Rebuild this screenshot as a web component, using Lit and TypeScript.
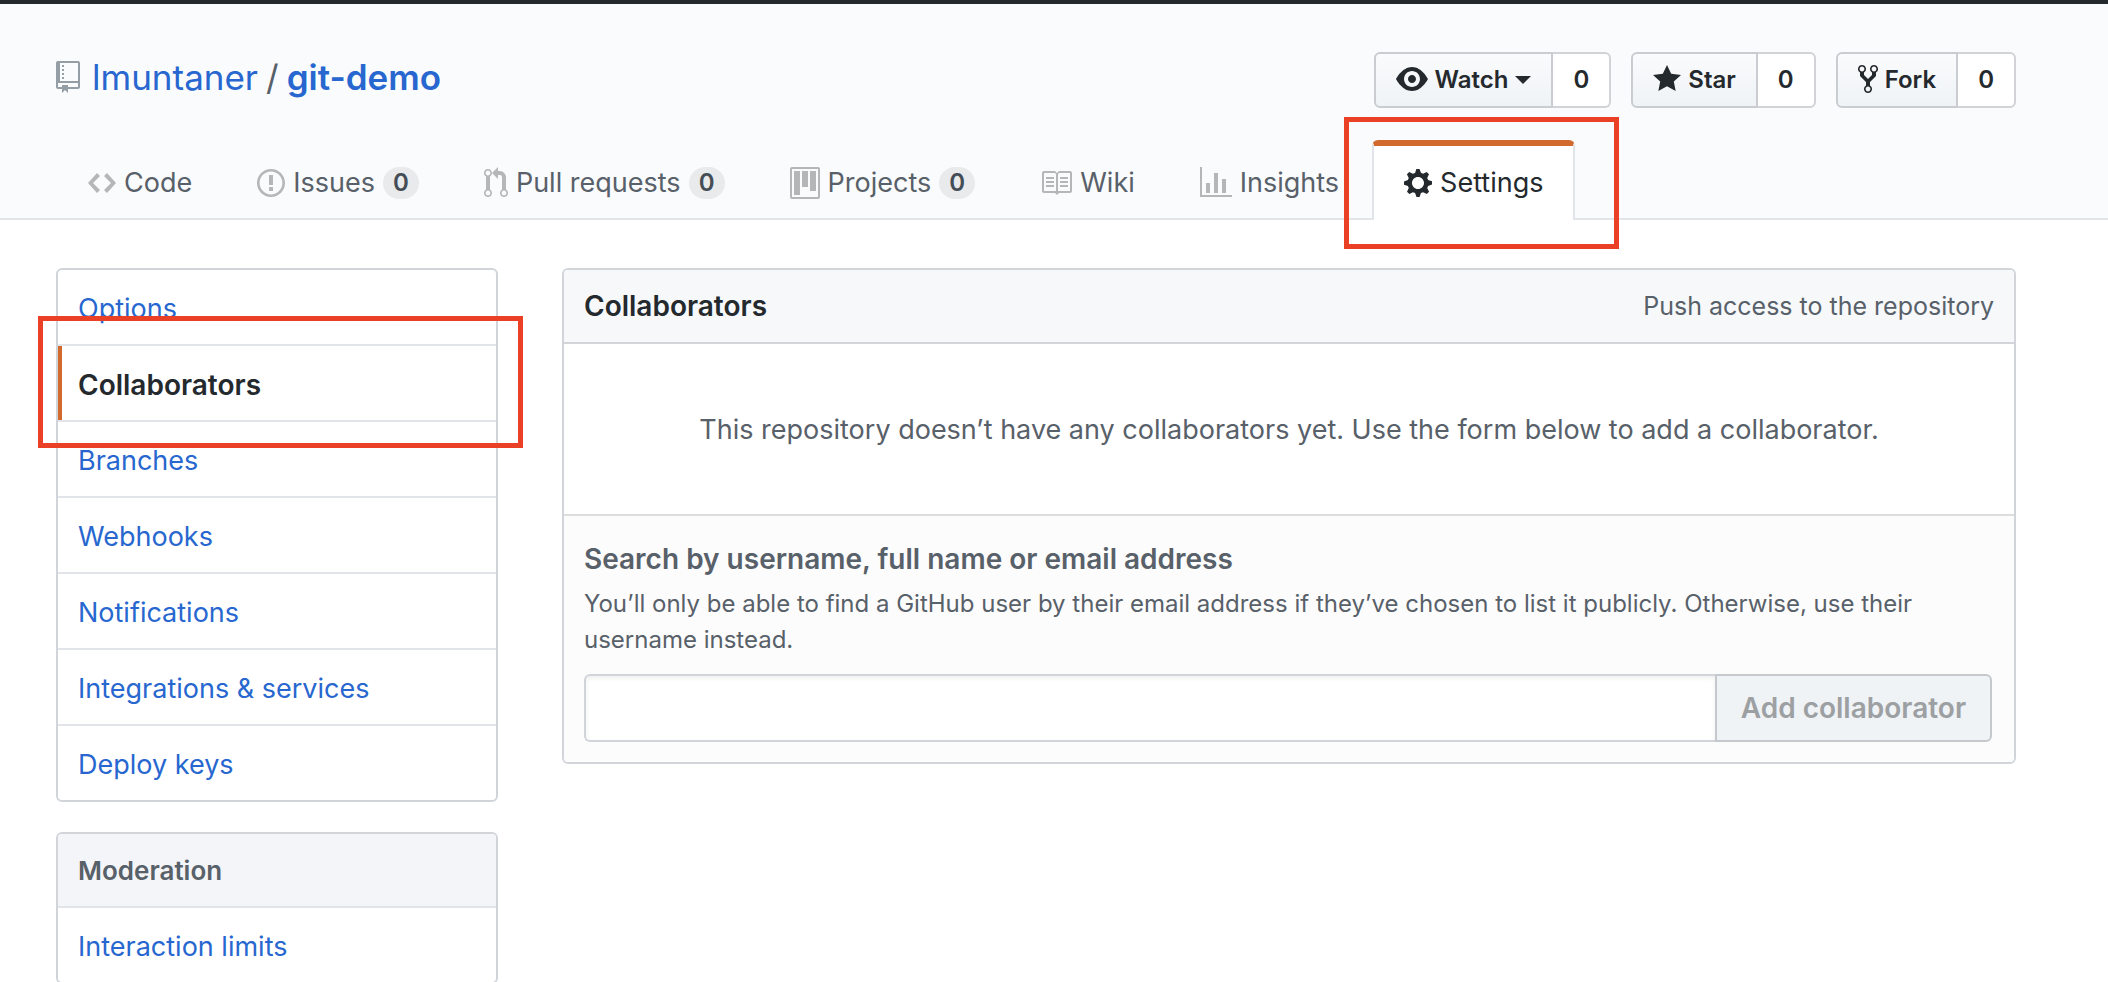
import { LitElement, html, css, nothing } from "lit";
import { customElement } from "lit/decorators.js";
import { classMap } from "lit/directives/class-map.js";

type Icon = { w: number; d: string };

const icons: Record<string, Icon> = {
  repo: { w: 12, d: "M4 9H3V8h1v1zm0-3H3v1h1V6zm0-2H3v1h1V4zm0-2H3v1h1V2zm8-1v12c0 .55-.45 1-1 1H6v2l-1.5-1.5L3 16v-2H1c-.55 0-1-.45-1-1V1c0-.55.45-1 1-1h10c.55 0 1 .45 1 1zm-1 10H1v2h2v-1h3v1h5v-2zm0-10H2v9h9V1z" },
  eye: { w: 16, d: "M8.06 2C3 2 0 8 0 8s3 6 8.06 6C13 14 16 8 16 8s-3-6-7.94-6zM8 12c-2.2 0-4-1.78-4-4 0-2.2 1.8-4 4-4 2.22 0 4 1.8 4 4 0 2.22-1.78 4-4 4zm2-4c0 1.11-.89 2-2 2-1.11 0-2-.89-2-2 0-1.11.89-2 2-2 1.11 0 2 .89 2 2z" },
  star: { w: 14, d: "M14 6l-4.9-.64L7 1 4.9 5.36 0 6l3.6 3.26L2.67 14 7 11.67 11.33 14l-.93-4.74L14 6z" },
  fork: { w: 10, d: "M8 1a1.993 1.993 0 0 0-1 3.72V6L5 8 3 6V4.72A1.993 1.993 0 0 0 2 1a1.993 1.993 0 0 0-1 3.72V6.5l3 3v1.78A1.993 1.993 0 0 0 5 15a1.993 1.993 0 0 0 1-3.72V9.5l3-3V4.72A1.993 1.993 0 0 0 8 1zM2 4.2C1.34 4.2.8 3.65.8 3c0-.65.55-1.2 1.2-1.2.65 0 1.2.55 1.2 1.2 0 .65-.55 1.2-1.2 1.2zm3 10c-.66 0-1.2-.55-1.2-1.2 0-.65.55-1.2 1.2-1.2.65 0 1.2.55 1.2 1.2 0 .65-.55 1.2-1.2 1.2zm3-10c-.66 0-1.2-.55-1.2-1.2 0-.65.55-1.2 1.2-1.2.65 0 1.2.55 1.2 1.2 0 .65-.55 1.2-1.2 1.2z" },
  code: { w: 14, d: "M9.5 3L8 4.5 11.5 8 8 11.5 9.5 13 14 8 9.5 3zm-5 0L0 8l4.5 5L6 11.5 2.5 8 6 4.5 4.5 3z" },
  issue: { w: 14, d: "M7 2.3c3.14 0 5.7 2.56 5.7 5.7s-2.56 5.7-5.7 5.7A5.71 5.71 0 0 1 1.3 8c0-3.14 2.56-5.7 5.7-5.7zM7 1C3.14 1 0 4.14 0 8s3.14 7 7 7 7-3.14 7-7-3.14-7-7-7zm1 3H6v5h2V4zm0 6H6v2h2v-2z" },
  pull: { w: 12, d: "M11 11.28V5c-.03-.78-.34-1.47-.94-2.06C9.46 2.35 8.78 2.03 8 2H7V0L4 3l3 3V4h1c.27.02.48.11.69.31.21.2.3.42.31.69v6.28A1.993 1.993 0 0 0 10 15a1.993 1.993 0 0 0 1-3.72zm-1 2.92c-.66 0-1.2-.55-1.2-1.2 0-.65.55-1.2 1.2-1.2.65 0 1.2.55 1.2 1.2 0 .65-.55 1.2-1.2 1.2zM4 3c0-1.11-.89-2-2-2a1.993 1.993 0 0 0-1 3.72v6.56A1.993 1.993 0 0 0 2 15a1.993 1.993 0 0 0 1-3.72V4.72c.59-.34 1-.98 1-1.72zm-.8 10c0 .66-.55 1.2-1.2 1.2-.65 0-1.2-.55-1.2-1.2 0-.65.55-1.2 1.2-1.2.65 0 1.2.55 1.2 1.2zM2 4.2C1.34 4.2.8 3.65.8 3c0-.65.55-1.2 1.2-1.2.65 0 1.2.55 1.2 1.2 0 .65-.55 1.2-1.2 1.2z" },
  project: { w: 15, d: "M10 12h3V2h-3v10zm-4-2h3V2H6v8zm-4 4h3V2H2v12zm-1 1h13V1H1v14zM14 0H1a1 1 0 0 0-1 1v14a1 1 0 0 0 1 1h13a1 1 0 0 0 1-1V1a1 1 0 0 0-1-1z" },
  book: { w: 16, d: "M3 5h4v1H3V5zm0 3h4V7H3v1zm0 2h4V9H3v1zm11-5h-4v1h4V5zm0 2h-4v1h4V7zm0 2h-4v1h4V9zm2-6v9c0 .55-.45 1-1 1H9.5l-1 1-1-1H2c-.55 0-1-.45-1-1V3c0-.55.45-1 1-1h5.5l1 1 1-1H15c.55 0 1 .45 1 1zm-8 .5L7.5 3H2v9h6V3.5zm7-.5H9.5l-.5.5V12h6V3z" },
  graph: { w: 16, d: "M16 14v1H0V0h1v14h15zM5 13H3V8h2v5zm4 0H7V3h2v10zm4 0h-2V6h2v7z" },
  gear: { w: 14, d: "M14 8.77v-1.6l-1.94-.64-.45-1.09.88-1.84-1.13-1.13-1.81.91-1.09-.45-.69-1.92h-1.6l-.63 1.94-1.11.45-1.84-.88-1.13 1.13.91 1.81-.45 1.09L0 7.23v1.59l1.94.64.45 1.09-.88 1.84 1.13 1.13 1.81-.91 1.09.45.69 1.92h1.59l.63-1.94 1.11-.45 1.84.88 1.13-1.13-.92-1.81.47-1.09L14 8.75v.02zM7 11c-1.66 0-3-1.34-3-3s1.34-3 3-3 3 1.34 3 3-1.34 3-3 3z" },
};

const icon = (name: string) => {
  const { w, d } = icons[name];
  return html`<svg class="icon" width=${w * 2} height="32" viewBox="0 0 ${w} 16" aria-hidden="true"><path fill-rule="evenodd" d=${d}></path></svg>`;
};

const tabs = [
  { icon: "code", label: "Code" },
  { icon: "issue", label: "Issues", count: 0 },
  { icon: "pull", label: "Pull requests", count: 0 },
  { icon: "project", label: "Projects", count: 0 },
  { icon: "book", label: "Wiki" },
  { icon: "graph", label: "Insights" },
  { icon: "gear", label: "Settings", selected: true },
];

const actions = [
  { icon: "eye", label: "Watch", count: 0, menu: true },
  { icon: "star", label: "Star", count: 0 },
  { icon: "fork", label: "Fork", count: 0 },
];

const sections = ["Options", "Collaborators", "Branches", "Webhooks", "Notifications", "Integrations & services", "Deploy keys"];

@customElement("app-root")
export class AppRoot extends LitElement {
  static styles = css`
    :host {
      display: block;
      height: 100vh;
      overflow: hidden;
      background: #fff;
      color: #24292e;
      font-family: Inter, "Liberation Sans", sans-serif;
      font-size: 27px;
      line-height: 42px;
    }
    * { box-sizing: border-box; }
    a { color: #2767cf; text-decoration: none; }
    h1, h2, h3, p, ul { margin: 0; padding: 0; }
    ul { list-style: none; }
    button, input { font: inherit; color: inherit; margin: 0; }
    .icon { display: block; flex: none; fill: currentColor; }

    .head {
      border-top: 4px solid #24292e;
      background: #fafbfc;
      box-shadow: inset 0 -2px #e1e4e8;
    }
    .wrap { padding: 0 92px 0 56px; }
    .title-row {
      display: flex;
      justify-content: space-between;
      align-items: flex-start;
      padding-top: 48px;
    }
    .title {
      display: flex;
      align-items: center;
      gap: 12px;
      font-size: 35px;
      line-height: 50px;
      font-weight: 400;
      color: #586069;
    }
    .title .icon { color: #959da5; }
    .title .path { display: flex; gap: 8px; }
    .title .name { font-weight: 600; }

    .actions { display: flex; gap: 20px; }
    .action {
      display: flex;
      height: 56px;
      font-size: 24px;
      font-weight: 600;
      line-height: 40px;
    }
    .action button {
      display: flex;
      align-items: center;
      gap: 7px;
      padding: 0 20px;
      border: 2px solid #c9ccd0;
      border-radius: 6px 0 0 6px;
      background: linear-gradient(#fafbfc, #eff3f6);
    }
    .action .icon { margin-bottom: 2px; }
    .action .count {
      display: flex;
      align-items: center;
      padding: 0 20px;
      border: 2px solid #d1d3d6;
      border-left: 0;
      border-radius: 0 6px 6px 0;
      background: #fff;
      color: #24292e;
    }
    .caret {
      border: 8px solid transparent;
      border-top-color: currentColor;
      border-bottom: 0;
    }

    .tabs { display: flex; gap: 1px; padding-top: 32px; }
    .tab {
      position: relative;
      display: flex;
      align-items: center;
      gap: 8px;
      height: 80px;
      padding: 0 30px;
      border: 2px solid transparent;
      border-top-width: 6px;
      border-bottom: 0;
      border-radius: 6px 6px 0 0;
      color: #586069;
      white-space: nowrap;
    }
    .tab .icon { color: #b4b6b8; }
    .tab.selected {
      border-color: #d26a2e #e1e4e8 transparent;
      background: #fff;
      color: #24292e;
    }
    .tab.selected .icon { color: inherit; }
    .counter {
      min-width: 36px;
      padding: 0 10px;
      border-radius: 20px;
      background: #e8eaec;
      color: #444d56;
      font-size: 24px;
      font-weight: 600;
      line-height: 32px;
      text-align: center;
    }

    .mark {
      position: absolute;
      z-index: 1;
      border: 5px solid #ea4025;
      pointer-events: none;
    }
    .tab .mark { inset: -29px -46px -29px -30px; }
    .menu .mark { inset: -30px -27px -28px -20px; }

    .body {
      display: grid;
      grid-template-columns: 442px minmax(0, 1fr);
      gap: 64px;
      align-items: start;
      padding-top: 48px;
    }
    .side { display: grid; gap: 30px; }
    .menu { border: 2px solid #d1d5da; border-radius: 6px; }
    .menu li { position: relative; border-bottom: 2px solid #e1e4e8; }
    .menu li:last-child { border-bottom: 0; }
    .menu a { display: block; padding: 18px 20px 14px; }
    .menu a.selected {
      padding-left: 16px;
      border-left: 4px solid #d26a2e;
      color: #24292e;
      font-size: 28px;
      font-weight: 600;
    }
    .menu h3 {
      padding: 17px 20px 15px;
      border-bottom: 2px solid #e1e4e8;
      border-radius: 4px 4px 0 0;
      background: #f3f5f8;
      color: #586069;
      font-size: 26px;
      font-weight: 600;
      line-height: 40px;
    }

    .box { border: 2px solid #d1d5da; border-radius: 6px; color: #586069; }
    .box-head {
      display: flex;
      justify-content: space-between;
      align-items: center;
      padding: 16px 20px;
      border-bottom: 2px solid #d1d5da;
      border-radius: 4px 4px 0 0;
      background: #f6f8fa;
      font-size: 25px;
      line-height: 40px;
    }
    .box-head h2 {
      color: #24292e;
      font-size: 28px;
      font-weight: 600;
    }
    .empty { padding: 65px 20px 63px; border-bottom: 2px solid #ddd; text-align: center; }
    .form {
      display: block;
      padding: 22px 20px 20px;
      border-radius: 0 0 4px 4px;
      background: #fcfcfc;
    }
    .form label { display: block; font-size: 28px; font-weight: 600; }
    .note { padding: 6px 0 16px; font-size: 24px; line-height: 36px; }
    .field { display: flex; padding-right: 2px; }
    .field input {
      flex: 1;
      min-width: 0;
      height: 68px;
      padding: 0 16px;
      border: 2px solid #d1d5da;
      border-right: 0;
      border-radius: 6px 0 0 6px;
      background: #fff;
      box-shadow: inset 0 2px 4px rgba(27, 31, 35, 0.075);
      outline: 0;
    }
    .field button {
      padding: 0 24px;
      border: 2px solid #c5c9cd;
      border-radius: 0 6px 6px 0;
      background: #eff3f6;
      color: #9da0a3;
      font-size: 28px;
      font-weight: 600;
    }
  `;

  render() {
    return html`
      <header class="head">
        <div class="wrap">
          <div class="title-row">
            <h1 class="title">
              ${icon("repo")}
              <span class="path"><a href="#owner">lmuntaner</a><span>/</span><a class="name" href="#repo">git-demo</a></span>
            </h1>
            <div class="actions">
              ${actions.map((a) => html`
                <div class="action">
                  <button type="button">${icon(a.icon)}${a.label}${a.menu ? html`<span class="caret"></span>` : nothing}</button>
                  <a class="count" href="#count">${a.count}</a>
                </div>`)}
            </div>
          </div>
          <nav class="tabs" aria-label="Repository">
            ${tabs.map((t) => html`
              <a class=${classMap({ tab: true, selected: !!t.selected })} href="#tab">
                ${icon(t.icon)}<span>${t.label}</span>
                ${t.count !== undefined ? html`<span class="counter">${t.count}</span>` : nothing}
                ${t.selected ? html`<span class="mark"></span>` : nothing}
              </a>`)}
          </nav>
        </div>
      </header>
      <div class="wrap body">
        <aside class="side">
          <nav class="menu" aria-label="Settings">
            <ul>
              ${sections.map((s) => {
                const selected = s === "Collaborators";
                return html`<li>
                  <a class=${classMap({ selected })} href="#section">${s}</a>
                  ${selected ? html`<span class="mark"></span>` : nothing}
                </li>`;
              })}
            </ul>
          </nav>
          <nav class="menu" aria-label="Moderation">
            <h3>Moderation</h3>
            <ul><li><a href="#limits">Interaction limits</a></li></ul>
          </nav>
        </aside>
        <main class="box">
          <div class="box-head">
            <h2>Collaborators</h2>
            <span>Push access to the repository</span>
          </div>
          <p class="empty">This repository doesn’t have any collaborators yet. Use the form below to add a collaborator.</p>
          <form class="form">
            <label for="search">Search by username, full name or email address</label>
            <p class="note" id="hint">You’ll only be able to find a GitHub user by their email address if they’ve chosen to list it publicly. Otherwise, use their username instead.</p>
            <div class="field">
              <input id="search" type="text" aria-describedby="hint" />
              <button type="submit" disabled>Add collaborator</button>
            </div>
          </form>
        </main>
      </div>
    `;
  }
}
